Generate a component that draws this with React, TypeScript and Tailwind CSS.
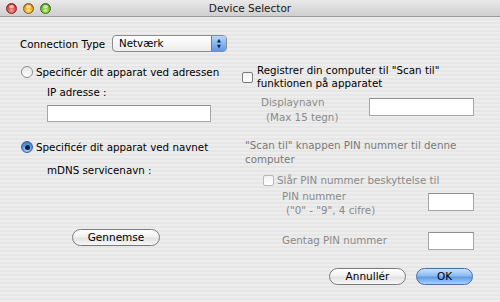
import React from 'react';

const FONT = "font-['DejaVu_Sans','Liberation_Sans',sans-serif]";

function Light({ tone }: { tone: 'red' | 'amber' | 'green' }) {
  const fill = {
    red: 'bg-[radial-gradient(circle_at_50%_70%,#f6a7a0_0%,#e0524a_45%,#a9221c_100%)] border-[#7e2a25]',
    amber: 'bg-[radial-gradient(circle_at_50%_70%,#fff08a_0%,#f4a92a_45%,#b8620c_100%)] border-[#8a5a1c]',
    green: 'bg-[radial-gradient(circle_at_50%_70%,#d8f59a_0%,#7cc23a_45%,#3c7d14_100%)] border-[#3f6a22]',
  }[tone];
  return (
    <span className={`relative block h-[11px] w-[11px] rounded-full border ${fill}`}>
      <span className="absolute left-[2px] top-[1px] h-[3px] w-[5px] rounded-full bg-white/60" />
    </span>
  );
}

function Radio({ on }: { on?: boolean }) {
  return on ? (
    <span className="flex h-[12px] w-[12px] shrink-0 items-center justify-center rounded-full border border-[#3a5f9c] bg-[radial-gradient(circle_at_50%_75%,#b8dcff_0%,#5a9ae6_50%,#2d64b8_100%)]">
      <span className="h-[5px] w-[5px] rounded-full bg-[#10203a]" />
    </span>
  ) : (
    <span className="block h-[12px] w-[12px] shrink-0 rounded-full border border-[#8c8c8c] bg-[linear-gradient(#e6e6e6,#ffffff)]" />
  );
}

function Check({ dim }: { dim?: boolean }) {
  return (
    <span
      className={`block h-[11px] w-[11px] shrink-0 rounded-[2px] border bg-[linear-gradient(#f2f2f2,#ffffff)] ${
        dim ? 'border-[#b8b8b8]' : 'border-[#7c7c7c]'
      }`}
    />
  );
}

function Field({ w, h = 'h-[18px]', cls = '' }: { w: string; h?: string; cls?: string }) {
  return <div className={`${w} ${h} ${cls} shrink-0 border border-[#a5a5a5] border-t-[#8e8e8e] bg-white`} />;
}

function Pill({ label, primary, w }: { label: string; primary?: boolean; w: string }) {
  return (
    <button
      className={`${w} h-[17px] rounded-full border text-[10.5px] leading-none text-black ${
        primary
          ? 'border-[#4a6fa8] bg-[linear-gradient(#c9e2ff_0%,#8cbcf2_45%,#5f9be4_55%,#a9d3ff_100%)]'
          : 'border-[#7a7a7a] bg-[linear-gradient(#ffffff_0%,#f1f1f1_45%,#e2e2e2_55%,#f7f7f7_100%)]'
      }`}
    >
      {label}
    </button>
  );
}

export default function App() {
  return (
    <div
      className={`${FONT} flex h-[302px] w-[500px] flex-col overflow-hidden bg-[repeating-linear-gradient(0deg,#ededed_0px,#ededed_2px,#e6e6e6_2px,#e6e6e6_4px)] text-[10.3px] leading-[14px] text-black`}
    >
      {/* title bar */}
      <div className="relative flex h-[17px] shrink-0 items-center border-b border-[#9a9a9a] bg-[linear-gradient(#e9e9e9,#cfcfcf)]">
        <div className="flex items-center gap-[6px] pl-[6px]">
          <Light tone="red" />
          <Light tone="amber" />
          <Light tone="green" />
        </div>
        <span className="absolute inset-x-0 text-center text-[10.5px] text-[#1a1a1a]">Device Selector</span>
      </div>

      {/* connection type */}
      <div className="flex items-center pl-[20px] pt-[18px]">
        <span className="w-[92px]">Connection Type</span>
        <div className="flex h-[17px] w-[115px] overflow-hidden rounded-[4px] border border-[#8c8c8c] bg-[linear-gradient(#ffffff,#ececec)]">
          <span className="flex-1 pl-[6px] leading-[15px]">Netværk</span>
          <span className="flex w-[15px] flex-col items-center justify-center gap-[1px] border-l border-[#5a7fb8] bg-[linear-gradient(#b6d6ff,#5e98e2)] text-[5px] leading-[5px] text-[#10203a]">
            <span>▲</span>
            <span>▼</span>
          </span>
        </div>
      </div>

      {/* two columns */}
      <div className="flex pt-[14px]">
        {/* left */}
        <div className="flex w-[240px] shrink-0 flex-col pl-[21px]">
          <div className="-mt-[1px] flex h-[14px] items-center gap-[3px]">
            <Radio />
            <span>Specificér dit apparat ved adressen</span>
          </div>
          <span className="mt-[6px] pl-[26px]">IP adresse :</span>
          <div className="mt-[6px] pl-[26px]">
            <Field w="w-[164px]" h="h-[17px]" />
          </div>
          <div className="mt-[18px] flex h-[14px] items-center gap-[3px]">
            <Radio on />
            <span>Specificér dit apparat ved navnet</span>
          </div>
          <span className="mt-[9px] pl-[26px]">mDNS servicenavn :</span>
          <div className="mt-[52px] pl-[51px]">
            <Pill label="Gennemse" w="w-[88px]" />
          </div>
        </div>

        {/* right */}
        <div className="flex w-[234px] flex-col">
          <div className="-mt-[2px] flex items-start gap-[4px] pl-[2px] leading-[13px]">
            <span className="mt-[8px]">
              <Check />
            </span>
            <span>
              Registrer din computer til "Scan til"
              <br />
              funktionen på apparatet
            </span>
          </div>
          <div className="mt-[5px] flex items-start justify-between">
            <div className="pl-[21px] leading-[15px] text-[#8a8a8a]">
              Displaynavn
              <br />
              <span className="pl-[5px]">(Max 15 tegn)</span>
            </div>
            <Field w="w-[105px]" cls="mt-[3px]" />
          </div>
          <div className="mt-[13px] pl-[5px] text-[#7a7a7a]">
            "Scan til" knappen PIN nummer til denne
            <br />
            computer
          </div>
          <div className="mt-[7px] flex h-[14px] items-center gap-[3px] pl-[23px] text-[#8a8a8a]">
            <Check dim />
            <span>Slår PIN nummer beskyttelse til</span>
          </div>
          <div className="mt-[2px] flex items-start justify-between">
            <div className="pl-[42px] text-[#8a8a8a]">
              PIN nummer
              <br />
              <span className="pl-[4px]">("0" - "9", 4 cifre)</span>
            </div>
            <Field w="w-[46px]" cls="mt-[4px]" />
          </div>
          <div className="mt-[15px] flex items-start justify-between">
            <span className="pl-[42px] pt-[1px] text-[#8a8a8a]">Gentag PIN nummer</span>
            <Field w="w-[46px]" />
          </div>
        </div>
      </div>

      {/* buttons */}
      <div className="mt-[18px] flex justify-end gap-[10px] pr-[27px]">
        <Pill label="Annullér" w="w-[77px]" />
        <Pill label="OK" primary w="w-[57px]" />
      </div>
    </div>
  );
}
